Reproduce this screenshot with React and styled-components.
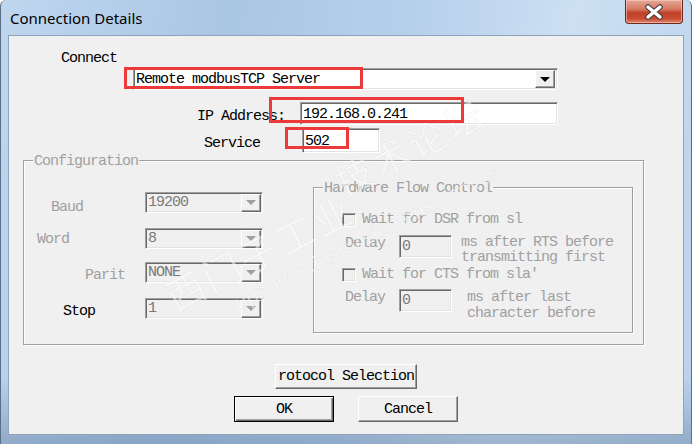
import React from 'react';
import styled, { createGlobalStyle } from 'styled-components';

const Global = createGlobalStyle`
  body {
    margin: 0;
    background: #fff;
  }
  * {
    box-sizing: border-box;
  }
`;

const mono = `"Liberation Mono", "DejaVu Sans Mono", monospace`;

const App = () => {
  return (
    <>
      <Global />
      <Window>
        <TitleBar>
          <Title>Connection Details</Title>
          <CloseButton>
            <svg width='22' height='16' viewBox='0 0 22 16'>
              <path d='M5 3 L17 13 M17 3 L5 13' stroke='#3b3b3b' strokeWidth='5.5' strokeLinecap='round' />
              <path d='M5 3 L17 13 M17 3 L5 13' stroke='#ffffff' strokeWidth='3.5' strokeLinecap='round' />
            </svg>
          </CloseButton>
        </TitleBar>

        <Client>
          <ConnectLabel>Connect</ConnectLabel>
          <Combo>
            <ComboText>Remote modbusTCP Server</ComboText>
            <DropButton>
              <Arrow />
            </DropButton>
          </Combo>

          <FieldRow $top={12}>
            <FieldLabel $indent={188} $width={103}>IP Address:</FieldLabel>
            <TextBox $width={258} $height={23}>192.168.0.241</TextBox>
          </FieldRow>
          <FieldRow $top={3}>
            <FieldLabel $indent={195} $width={98}>Service</FieldLabel>
            <TextBox $width={78} $height={25}>502</TextBox>
          </FieldRow>

          <GroupBox $top={7} $left={14} $width={621} $height={185}>
            <Legend $left={9}>Configuration</Legend>
            <ConfigBody>
              <ConfigColumn>
                <ConfigRow>
                  <ConfigLabel $indent={27} $drop={8}>Baud</ConfigLabel>
                  <DisabledCombo>
                    <span>19200</span>
                    <DropButton $disabled><Arrow $disabled /></DropButton>
                  </DisabledCombo>
                </ConfigRow>
                <ConfigRow $top={15}>
                  <ConfigLabel $indent={13} $drop={4}>Word</ConfigLabel>
                  <DisabledCombo>
                    <span>8</span>
                    <DropButton $disabled><Arrow $disabled /></DropButton>
                  </DisabledCombo>
                </ConfigRow>
                <ConfigRow $top={13}>
                  <ConfigLabel $indent={61} $drop={6}>Parit</ConfigLabel>
                  <DisabledCombo>
                    <span>NONE</span>
                    <DropButton $disabled><Arrow $disabled /></DropButton>
                  </DisabledCombo>
                </ConfigRow>
                <ConfigRow $top={15}>
                  <ConfigLabel $indent={39} $drop={6} $enabled>Stop</ConfigLabel>
                  <DisabledCombo>
                    <span>1</span>
                    <DropButton $disabled><Arrow $disabled /></DropButton>
                  </DisabledCombo>
                </ConfigRow>
              </ConfigColumn>

              <FlowGroup>
                <Legend $left={9}>Hardware Flow Control</Legend>
                <CheckRow>
                  <CheckBox />
                  <span>Wait for DSR from sl</span>
                </CheckRow>
                <DelayRow $top={8}>
                  <DelayLabel>Delay</DelayLabel>
                  <DelayInput>0</DelayInput>
                  <Note $gap={9} $lh={15} $pad={0}>
                    <div>ms after RTS before</div>
                    <div>transmitting first</div>
                  </Note>
                </DelayRow>
                <CheckRow $top={3}>
                  <CheckBox />
                  <span>Wait for CTS from sla'</span>
                </CheckRow>
                <DelayRow $top={7}>
                  <DelayLabel>Delay</DelayLabel>
                  <DelayInput>0</DelayInput>
                  <Note $gap={15} $lh={16} $pad={1}>
                    <div>ms after last</div>
                    <div>character before</div>
                  </Note>
                </DelayRow>
              </FlowGroup>
            </ConfigBody>
          </GroupBox>

          <ButtonArea>
            <PushButton $width={142} $height={25}>rotocol Selection</PushButton>
            <ButtonRow>
              <PushButton $width={100} $height={26} $default>OK</PushButton>
              <PushButton $width={100} $height={26}>Cancel</PushButton>
            </ButtonRow>
          </ButtonArea>

          <Mark $x={250} $y={215} $size={38} $cjk>西门子工业</Mark>
          <Mark $x={400} $y={110} $size={38} $cjk>技术论坛</Mark>
          <Mark $x={353} $y={204} $size={21}>support.industry.siemens.com/cs</Mark>

          <RedBox $x={115} $y={31} $w={239} $h={22} />
          <RedBox $x={260} $y={61} $w={195} $h={26} />
          <RedBox $x={276} $y={91} $w={64} $h={22} />
        </Client>
      </Window>
    </>
  );
};

// Window frame
const Window = styled.div`
  width: 692px;
  height: 444px;
  padding: 0 7px 9px 7px;
  border-left: 1px solid #5c6e84;
  border-right: 1px solid #5c6e84;
  border-radius: 6px 6px 0 0;
  background:
    linear-gradient(to bottom, rgba(255, 255, 255, 0) 85%, rgba(70, 100, 135, 0.35) 100%),
    linear-gradient(100deg, #bfd6ee 0%, #aac6e5 30%, #b7d0ec 55%, #cde0f3 75%, #b9d2ec 100%);
  display: flex;
  flex-direction: column;
`;

const TitleBar = styled.div`
  height: 35px;
  display: flex;
  justify-content: space-between;
  align-items: flex-start;
`;

const Title = styled.div`
  padding: 8px 0 0 2px;
  font-family: 'Noto Sans', 'Open Sans', sans-serif;
  font-size: 15px;
  line-height: 20px;
  color: #000;
`;

const CloseButton = styled.div`
  width: 58px;
  height: 24px;
  margin-right: 1px;
  border: 1px solid #6e2a22;
  border-top: none;
  border-radius: 0 0 4px 4px;
  background: linear-gradient(to bottom, #e6a898 0%, #d67863 40%, #c0412a 55%, #c84a32 80%, #e08668 100%);
  box-shadow: inset 0 0 0 1px rgba(255, 220, 210, 0.5);
  display: flex;
  align-items: center;
  justify-content: center;
`;

const Client = styled.div`
  position: relative;
  height: 400px;
  padding-top: 15px;
  border: 1px solid #8ea3ba;
  background: #f0f0f0;
  font-family: ${mono};
  font-size: 15px;
  letter-spacing: -1px;
  color: #000;
  overflow: hidden;
`;

// Top fields
const ConnectLabel = styled.div`
  margin-left: 52px;
  height: 16px;
  line-height: 16px;
`;

const sunken = `
  border-style: solid;
  border-width: 1px;
  border-color: #a0a0a0 #ffffff #ffffff #a0a0a0;
  box-shadow: inset 1px 1px 0 #696969, inset -1px -1px 0 #e3e3e3;
`;

const Combo = styled.div`
  margin: 1px 0 0 124px;
  width: 425px;
  height: 22px;
  ${sunken}
  background: #fff;
  display: flex;
  align-items: center;
  justify-content: space-between;
  padding: 0 2px 0 2px;
`;

const ComboText = styled.span`
  line-height: 18px;
  padding-top: 2px;
`;

const DropButton = styled.div`
  width: 20px;
  height: 18px;
  background: #f0f0f0;
  border-style: solid;
  border-width: 1px;
  border-color: #fff #696969 #696969 #fff;
  box-shadow: inset -1px -1px 0 #a0a0a0;
  display: flex;
  align-items: center;
  justify-content: center;
  margin-left: auto;
`;

const Arrow = styled.div`
  width: 0;
  height: 0;
  border-left: 5px solid transparent;
  border-right: 5px solid transparent;
  border-top: 5px solid ${(p) => (p.$disabled ? '#a0a0a0' : '#000')};
`;

const FieldRow = styled.div`
  display: flex;
  align-items: center;
  margin-top: ${(p) => p.$top}px;
`;

const FieldLabel = styled.div`
  margin-left: ${(p) => p.$indent}px;
  width: ${(p) => p.$width}px;
  padding-top: 6px;
  line-height: 16px;
`;

const TextBox = styled.div`
  width: ${(p) => p.$width}px;
  height: ${(p) => p.$height}px;
  ${sunken}
  background: #fff;
  padding: 2px 2px 0;
  line-height: ${(p) => p.$height - 4}px;
`;

// Group boxes
const GroupBox = styled.div`
  position: relative;
  margin: ${(p) => p.$top}px 0 0 ${(p) => p.$left}px;
  width: ${(p) => p.$width}px;
  height: ${(p) => p.$height}px;
  border: 1px solid #a0a0a0;
  box-shadow: 1px 1px 0 #fff, inset 1px 1px 0 #fff;
`;

const Legend = styled.div`
  position: absolute;
  top: -7px;
  left: ${(p) => p.$left}px;
  padding: 0 1px;
  background: #f0f0f0;
  color: #a0a0a0;
  line-height: 16px;
`;

const ConfigBody = styled.div`
  display: flex;
  align-items: flex-start;
`;

const ConfigColumn = styled.div`
  width: 289px;
  padding-top: 31px;
  display: flex;
  flex-direction: column;
`;

const ConfigRow = styled.div`
  display: flex;
  align-items: flex-start;
  height: 21px;
  margin-top: ${(p) => p.$top || 0}px;
`;

const ConfigLabel = styled.div`
  width: 121px;
  padding: ${(p) => p.$drop}px 0 0 ${(p) => p.$indent}px;
  color: ${(p) => (p.$enabled ? '#000' : '#a0a0a0')};
  line-height: 16px;
`;

const DisabledCombo = styled.div`
  width: 118px;
  height: 21px;
  ${sunken}
  background: #f0f0f0;
  color: #7a7a7a;
  display: flex;
  align-items: center;
  padding: 0 1px 0 2px;
  line-height: 17px;
`;

const FlowGroup = styled.div`
  position: relative;
  margin-top: 26px;
  width: 320px;
  height: 146px;
  border: 1px solid #a0a0a0;
  box-shadow: 1px 1px 0 #fff, inset 1px 1px 0 #fff;
  padding-top: 25px;
  color: #a0a0a0;
`;

const CheckRow = styled.div`
  display: flex;
  align-items: center;
  gap: 6px;
  height: 14px;
  padding-left: 28px;
  margin-top: ${(p) => p.$top || 0}px;
  line-height: 16px;
`;

const CheckBox = styled.div`
  width: 14px;
  height: 14px;
  ${sunken}
  background: #f0f0f0;
`;

const DelayRow = styled.div`
  display: flex;
  align-items: flex-start;
  padding-left: 31px;
  margin-top: ${(p) => p.$top}px;
`;

const DelayLabel = styled.div`
  width: 54px;
  line-height: 18px;
`;

const DelayInput = styled.div`
  width: 53px;
  height: 23px;
  ${sunken}
  background: #f0f0f0;
  padding: 1px 2px 0;
  line-height: 19px;
  color: #7a7a7a;
`;

const Note = styled.div`
  margin-left: ${(p) => p.$gap}px;
  padding-top: ${(p) => p.$pad}px;
  line-height: ${(p) => p.$lh}px;
  white-space: nowrap;
`;

// Buttons
const ButtonArea = styled.div`
  margin-top: 19px;
  display: flex;
  flex-direction: column;
  align-items: center;
  gap: 7px;
`;

const ButtonRow = styled.div`
  display: flex;
  gap: 24px;
`;

const PushButton = styled.div`
  width: ${(p) => p.$width}px;
  height: ${(p) => p.$height}px;
  background: #f0f0f0;
  border: 1px solid;
  border-color: ${(p) => (p.$default ? '#000' : '#fff #696969 #696969 #fff')};
  box-shadow: ${(p) =>
    p.$default
      ? 'inset 1px 1px 0 #fff, inset -1px -1px 0 #696969, inset -2px -2px 0 #a0a0a0'
      : 'inset -1px -1px 0 #a0a0a0'};
  display: flex;
  align-items: center;
  justify-content: center;
  white-space: nowrap;
  overflow: hidden;
`;

// Overlays
const Mark = styled.span`
  position: absolute;
  left: ${(p) => p.$x}px;
  top: ${(p) => p.$y}px;
  transform: translate(-50%, -50%) rotate(-27deg);
  font-family: ${(p) =>
    p.$cjk ? `"Noto Sans CJK SC", sans-serif` : `"Liberation Sans", Arial, sans-serif`};
  font-size: ${(p) => p.$size}px;
  letter-spacing: ${(p) => (p.$cjk ? '3px' : '0')};
  white-space: nowrap;
  color: rgba(255, 255, 255, 0.55);
  -webkit-text-stroke: 0.6px rgba(120, 120, 120, 0.12);
  pointer-events: none;
`;

const RedBox = styled.div`
  position: absolute;
  left: ${(p) => p.$x}px;
  top: ${(p) => p.$y}px;
  width: ${(p) => p.$w}px;
  height: ${(p) => p.$h}px;
  border: 3px solid #ec3a3a;
  pointer-events: none;
`;

export default App;
